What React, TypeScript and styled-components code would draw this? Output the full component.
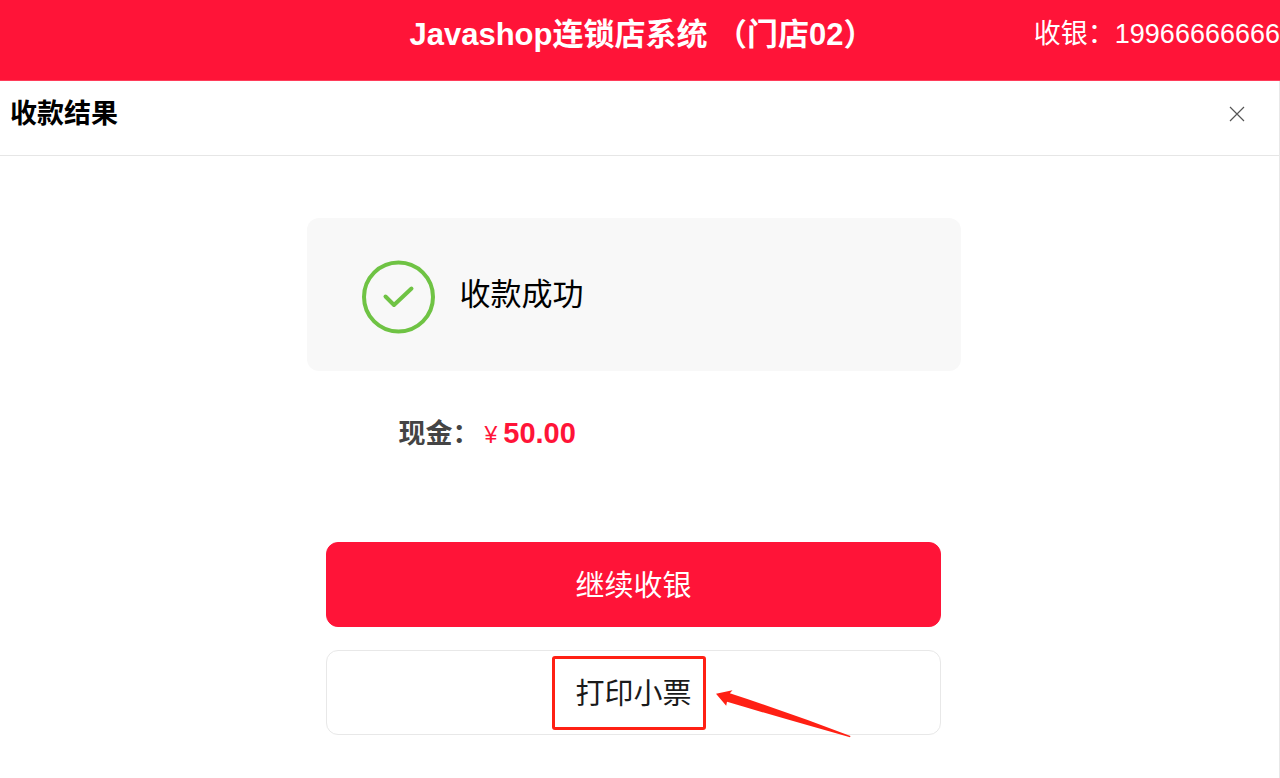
import React from "react";
import styled, { createGlobalStyle } from "styled-components";

const RED = "#ff1438";
const MARK = "#ff2014";

const GlobalStyle = createGlobalStyle`
  *, *::before, *::after { box-sizing: border-box; }
  html, body, #root { height: 100%; }
  body {
    margin: 0;
    background: #fff;
    color: #000;
    font-family: "Liberation Sans", "Noto Sans CJK SC", sans-serif;
  }
  h1, h2, p { margin: 0; }
`;

const Page = styled.div`
  display: flex;
  flex-direction: column;
  min-height: 100%;
  overflow-x: hidden;
`;

const TopBar = styled.header`
  display: grid;
  grid-template-columns: 1fr auto 1fr;
  align-items: start;
  min-height: 81px;
  padding-top: 14px;
  background: ${RED};
  border-bottom: 1px solid #ff3d5a;
  color: #fff;
  white-space: nowrap;
`;

const StoreTitle = styled.h1`
  grid-column: 2;
  padding-left: 4px;
  font-size: 31px;
  line-height: 42px;
  font-weight: 700;
`;

const Cashier = styled.p`
  justify-self: end;
  font-size: 27px;
  line-height: 40px;
`;

const Panel = styled.section`
  display: flex;
  flex-direction: column;
  flex: 1;
  border-right: 1px solid #e8e8e8;
`;

const PanelHeader = styled.div`
  display: flex;
  align-items: flex-start;
  justify-content: space-between;
  padding: 13px 30px 21px 10px;
  border-bottom: 1px solid #e6e6e6;
`;

const PanelTitle = styled.h2`
  font-size: 27px;
  line-height: 40px;
  font-weight: 700;
`;

const CloseButton = styled.button`
  display: flex;
  align-items: center;
  justify-content: center;
  width: 24px;
  height: 40px;
  padding: 0;
  border: 0;
  background: none;
  color: #555;
  cursor: pointer;
`;

const Content = styled.div`
  display: flex;
  flex-direction: column;
  align-items: center;
  padding: 62px 12px 42px 0;
`;

const StatusCard = styled.div`
  display: flex;
  align-items: center;
  gap: 24px;
  width: 100%;
  max-width: 654px;
  min-height: 153px;
  padding: 4px 54px 0;
  border-radius: 12px;
  background: #f8f8f8;
`;

const StatusText = styled.p`
  padding-bottom: 4px;
  font-size: 31px;
  line-height: 40px;
`;

const Amount = styled.p`
  display: flex;
  align-items: baseline;
  width: 100%;
  max-width: 654px;
  margin-top: 42px;
  padding-left: 92px;
  font-size: 27px;
  line-height: 40px;
  font-weight: 700;
  color: #444;
`;

const Currency = styled.span`
  margin: 0 6px 0 5px;
  font-size: 23px;
  font-weight: 400;
  color: ${RED};
`;

const Price = styled.strong`
  font-size: 29px;
  color: ${RED};
`;

const Actions = styled.div`
  display: flex;
  flex-direction: column;
  gap: 23px;
  width: 100%;
  max-width: 615px;
  margin-top: 87px;
`;

const ActionButton = styled.button<{ $primary?: boolean }>`
  width: 100%;
  height: 85px;
  padding: 3px 0 0;
  border: 1px solid ${(p) => (p.$primary ? RED : "#e8e8e8")};
  border-radius: 12px;
  background: ${(p) => (p.$primary ? RED : "#fff")};
  color: ${(p) => (p.$primary ? "#fff" : "#1a1a1a")};
  font-family: inherit;
  font-size: 29px;
  line-height: 40px;
  cursor: pointer;
`;

const Highlighted = styled.div`
  position: relative;
`;

const HighlightBox = styled.span`
  position: absolute;
  top: 6px;
  left: calc(50% - 82px);
  width: 154px;
  height: 74px;
  border: 3px solid ${MARK};
  border-radius: 3px;
  pointer-events: none;
`;

const HighlightArrow = styled.svg`
  position: absolute;
  top: 38px;
  left: calc(50% + 80px);
  pointer-events: none;
`;

export default function App() {
  return (
    <Page>
      <GlobalStyle />
      <TopBar>
        <StoreTitle>Javashop连锁店系统 （门店02）</StoreTitle>
        <Cashier>收银：19966666666</Cashier>
      </TopBar>
      <Panel>
        <PanelHeader>
          <PanelTitle>收款结果</PanelTitle>
          <CloseButton type="button" aria-label="关闭">
            <svg width="16" height="16" viewBox="0 0 16 16" fill="none" stroke="currentColor" strokeWidth="1.2">
              <path d="M1 1 15 15M15 1 1 15" />
            </svg>
          </CloseButton>
        </PanelHeader>
        <Content>
          <StatusCard>
            <svg width="75" height="75" viewBox="0 0 75 75" fill="none" stroke="#6fc344" strokeWidth="4" aria-hidden="true">
              <circle cx="37.5" cy="38" r="34.5" />
              <path d="M24.5 37.5 33 46 50.5 29.5" strokeLinecap="round" strokeLinejoin="round" />
            </svg>
            <StatusText>收款成功</StatusText>
          </StatusCard>
          <Amount>
            现金：<Currency>¥</Currency>
            <Price>50.00</Price>
          </Amount>
          <Actions>
            <ActionButton type="button" $primary>继续收银</ActionButton>
            <Highlighted>
              <ActionButton type="button">打印小票</ActionButton>
              <HighlightBox />
              <HighlightArrow width="140" height="52" viewBox="0 0 140 52" aria-hidden="true">
                <path fill={MARK} d="M2 5.7 18.5 2.3 15.8 5.3Q78 25.5 136.5 48L136 49.2Q78 33 13 13.8L12.2 17.7Z" />
              </HighlightArrow>
            </Highlighted>
          </Actions>
        </Content>
      </Panel>
    </Page>
  );
}
